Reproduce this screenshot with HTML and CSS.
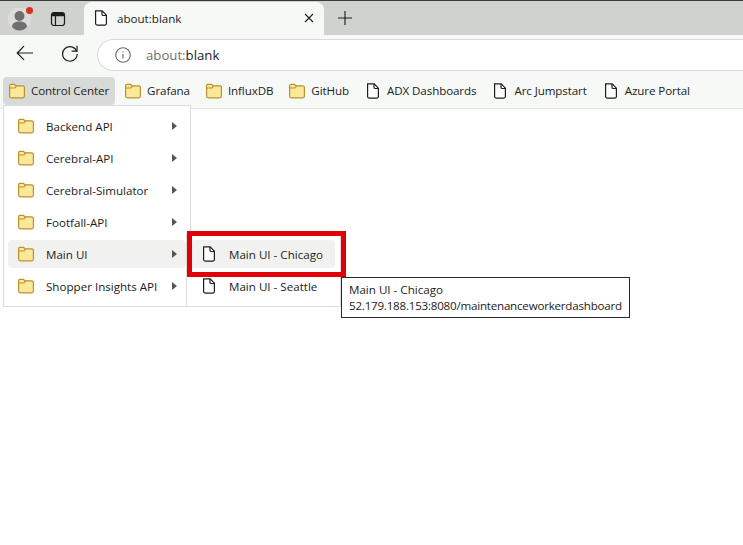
FILE: index.html
```html
<!DOCTYPE html>
<html lang="en">
  <head>
    <meta charset="UTF-8" />
    <meta name="viewport" content="width=device-width, initial-scale=1.0" />
    <title>about:blank</title>
    <link rel="stylesheet" href="styles.css">
  </head>
  <body>
    <svg class="defs" width="0" height="0">
      <symbol id="folder" viewBox="0 0 16 16">
        <path d="M.6 2.800C.6 1.900 1.200 1.300 2 1.300h3.400l1.700 1.500h6.700c.9 0 1.600.6 1.600 1.500v9c0 .9-.7 1.500-1.600 1.500H2.200c-.9 0-1.600-.6-1.600-1.500z" fill="#fbe999" stroke="#b8922f" stroke-width="1.200" />
        <path d="M.8 5h5.200l1.500-1.900" fill="none" stroke="#b8922f" stroke-width="1.100" />
      </symbol>
      <symbol id="page" viewBox="0 0 16 16">
        <path d="M2.600.9h6.600l4.200 4.300v8.400c0 .9-.6 1.500-1.500 1.500H4.100c-.9 0-1.500-.6-1.500-1.500z" fill="#fff" stroke="#1c1c1c" stroke-width="1.200" />
        <path d="M9 1v3.200c0 .8.500 1.300 1.300 1.300h3" fill="none" stroke="#1c1c1c" stroke-width="1.200" />
      </symbol>
    </svg>

    <header class="tabstrip">
      <div class="profile">
        <svg width="24" height="24" viewBox="0 0 24 24">
          <circle cx="11.500" cy="12" r="11.500" fill="#dcdddb" />
          <circle cx="11.500" cy="9" r="5" fill="#6f6f6f" />
          <path d="M4 20c0-4 3.500-5.500 7.500-5.500S19 16 19 20c-2 2.500-4.500 3.500-7.500 3.500S6 22.500 4 20z" fill="#6f6f6f" />
        </svg>
        <span class="profile-dot"></span>
      </div>
      <svg class="tab-actions" width="16" height="16" viewBox="0 0 16 16">
        <rect x="1.500" y="1.500" width="13" height="13" rx="2.500" fill="none" stroke="#1c1c1c" stroke-width="1.200" />
        <path d="M1.500 4c0-1.500 1-2.500 2.500-2.500h8c1.500 0 2.500 1 2.500 2.500v1.300h-13z" fill="#1c1c1c" />
        <path d="M5.500 5v9.500" stroke="#1c1c1c" stroke-width="1.200" />
      </svg>
      <div class="tab">
        <svg class="icon" width="16" height="16"><use href="#page" /></svg>
        <span class="tab-title">about:blank</span>
        <svg class="tab-close" width="10" height="10" viewBox="0 0 10 10">
          <path d="M1 1l8 8M9 1l-8 8" stroke="#1c1c1c" stroke-width="1.100" />
        </svg>
      </div>
      <svg class="new-tab" width="16" height="16" viewBox="0 0 16 16">
        <path d="M8 1v14M1 8h14" stroke="#1c1c1c" stroke-width="1.100" />
      </svg>
    </header>

    <div class="toolbar">
      <svg class="nav-back" width="18" height="16" viewBox="0 0 18 16">
        <path d="M17 8H1.500M8 1.200L1.200 8 8 14.800" fill="none" stroke="#1c1c1c" stroke-width="1.200" />
      </svg>
      <svg class="nav-reload" width="18" height="18" viewBox="0 0 18 18">
        <path d="M15.800 7.500A7.300 7.300 0 1 0 16.200 10" fill="none" stroke="#1c1c1c" stroke-width="1.200" />
        <path d="M16 1.800v5.400h-5.400" fill="none" stroke="#1c1c1c" stroke-width="1.200" />
      </svg>
      <div class="address">
        <svg width="16" height="16" viewBox="0 0 16 16">
          <circle cx="8" cy="8" r="7.300" fill="none" stroke="#6a6a6a" stroke-width="1.100" />
          <path d="M8 7v4.500M8 4.200v1.300" stroke="#6a6a6a" stroke-width="1.200" />
        </svg>
        <span class="url"><span class="url-scheme">about:</span>blank</span>
      </div>
    </div>

    <nav class="bookmarks">
      <div class="bookmark open"><svg width="16" height="16"><use href="#folder" /></svg>Control Center</div>
      <div class="bookmark"><svg width="16" height="16"><use href="#folder" /></svg>Grafana</div>
      <div class="bookmark"><svg width="16" height="16"><use href="#folder" /></svg>InfluxDB</div>
      <div class="bookmark"><svg width="16" height="16"><use href="#folder" /></svg>GitHub</div>
      <div class="bookmark"><svg width="16" height="16"><use href="#page" /></svg>ADX Dashboards</div>
      <div class="bookmark"><svg width="16" height="16"><use href="#page" /></svg>Arc Jumpstart</div>
      <div class="bookmark"><svg width="16" height="16"><use href="#page" /></svg>Azure Portal</div>
    </nav>

    <div class="menu main-menu">
      <div class="menu-item"><svg width="16" height="16"><use href="#folder" /></svg><span class="menu-label">Backend API</span><span class="arrow"></span></div>
      <div class="menu-item"><svg width="16" height="16"><use href="#folder" /></svg><span class="menu-label">Cerebral-API</span><span class="arrow"></span></div>
      <div class="menu-item"><svg width="16" height="16"><use href="#folder" /></svg><span class="menu-label">Cerebral-Simulator</span><span class="arrow"></span></div>
      <div class="menu-item"><svg width="16" height="16"><use href="#folder" /></svg><span class="menu-label">Footfall-API</span><span class="arrow"></span></div>
      <div class="menu-item active"><svg width="16" height="16"><use href="#folder" /></svg><span class="menu-label">Main UI</span><span class="arrow"></span></div>
      <div class="menu-item"><svg width="16" height="16"><use href="#folder" /></svg><span class="menu-label">Shopper Insights API</span><span class="arrow"></span></div>
    </div>

    <div class="menu sub-menu">
      <div class="menu-item active"><svg width="16" height="16"><use href="#page" /></svg><span class="menu-label">Main UI - Chicago</span></div>
      <div class="menu-item"><svg width="16" height="16"><use href="#page" /></svg><span class="menu-label">Main UI - Seattle</span></div>
    </div>

    <div class="highlight-box"></div>

    <div class="tooltip">Main UI - Chicago<br><span class="tooltip-url">52.179.188.153:8080/maintenanceworkerdashboard</span></div>
  </body>
</html>
```

FILE: styles.css
```css
* {
  box-sizing: border-box;
}
html,
body {
  height: 100%;
}
body {
  margin: 0;
  position: relative;
  overflow: hidden;
  background: white;
  color: #1c1c1c;
  font-family: "Open Sans", Arial, sans-serif;
  font-size: 11.6px;
}
.defs {
  position: absolute;
}
svg {
  flex: none;
  display: block;
}

.tabstrip {
  height: 35px;
  display: flex;
  align-items: flex-end;
  padding-left: 8px;
  background: #d0d2cf;
  border-top: 1px solid #3a3a3a;
}
.profile {
  position: relative;
  width: 24px;
  height: 24px;
  margin-bottom: 4px;
}
.profile-dot {
  position: absolute;
  top: 0;
  right: -1px;
  width: 7px;
  height: 7px;
  border-radius: 50%;
  background: #d9301f;
}
.tab-actions {
  margin: 0 0 8px 18px;
}
.tab {
  width: 240px;
  height: 33px;
  margin-left: 18px;
  padding: 0 10px 1px 9px;
  display: flex;
  align-items: center;
  background: #f7f9f7;
  border-radius: 8px 8px 0 0;
}
.tab-title {
  flex: 1;
  margin-left: 8px;
}
.new-tab {
  margin: 0 0 9px 13px;
}

.toolbar {
  height: 36px;
  display: flex;
  align-items: center;
  background: #f7f9f7;
}
.nav-back {
  margin-left: 16px;
}
.nav-reload {
  margin-left: 27px;
}
.address {
  flex: 1;
  height: 32px;
  margin: 4px 0 0 18px;
  padding-left: 17px;
  display: flex;
  align-items: center;
  gap: 15px;
  background: white;
  border: 1px solid #d8dad8;
  border-right: none;
  border-radius: 16px 0 0 16px;
  font-size: 13.2px;
}
.url-scheme {
  color: #6f6f6f;
}

.bookmarks {
  height: 38px;
  display: flex;
  align-items: flex-start;
  padding: 6px 0 0 3px;
  gap: 4px;
  background: #f7f9f7;
  border-bottom: 1px solid #e6e8e6;
  letter-spacing: -0.1px;
}
.bookmark {
  height: 28px;
  padding: 0 6px 2px;
  display: flex;
  align-items: center;
  gap: 6px;
  border-radius: 4px;
}
.bookmark svg {
  margin-top: 2px;
}
.bookmark.open {
  background: #d8dad8;
}

.menu {
  position: absolute;
  display: flex;
  flex-direction: column;
  gap: 4px;
  padding: 6px 4px;
  background: white;
  border: 1px solid #dcdcdc;
}
.main-menu {
  left: 3px;
  top: 105px;
  width: 188px;
  height: 202px;
}
.sub-menu {
  left: 186px;
  top: 233px;
  width: 155px;
  height: 74px;
  padding-right: 5px;
}
.menu-item {
  height: 28px;
  padding: 0 9px 0 10px;
  display: flex;
  align-items: center;
  border-radius: 4px;
}
.menu-item.active {
  background: #f1f2f0;
}
.menu-label {
  flex: 1;
  margin-left: 12px;
}
.arrow {
  border-left: 5px solid #555;
  border-top: 4px solid transparent;
  border-bottom: 4px solid transparent;
}
.highlight-box {
  position: absolute;
  left: 187px;
  top: 231px;
  width: 159px;
  height: 46px;
  border: 5px solid #e00008;
}
.tooltip {
  position: absolute;
  left: 341px;
  top: 277px;
  width: 289px;
  height: 41px;
  padding: 4px 7px;
  background: white;
  border: 1px solid #2a2a2a;
  line-height: 16px;
  white-space: nowrap;
}
.tooltip-url {
  letter-spacing: -0.22px;
}
```
